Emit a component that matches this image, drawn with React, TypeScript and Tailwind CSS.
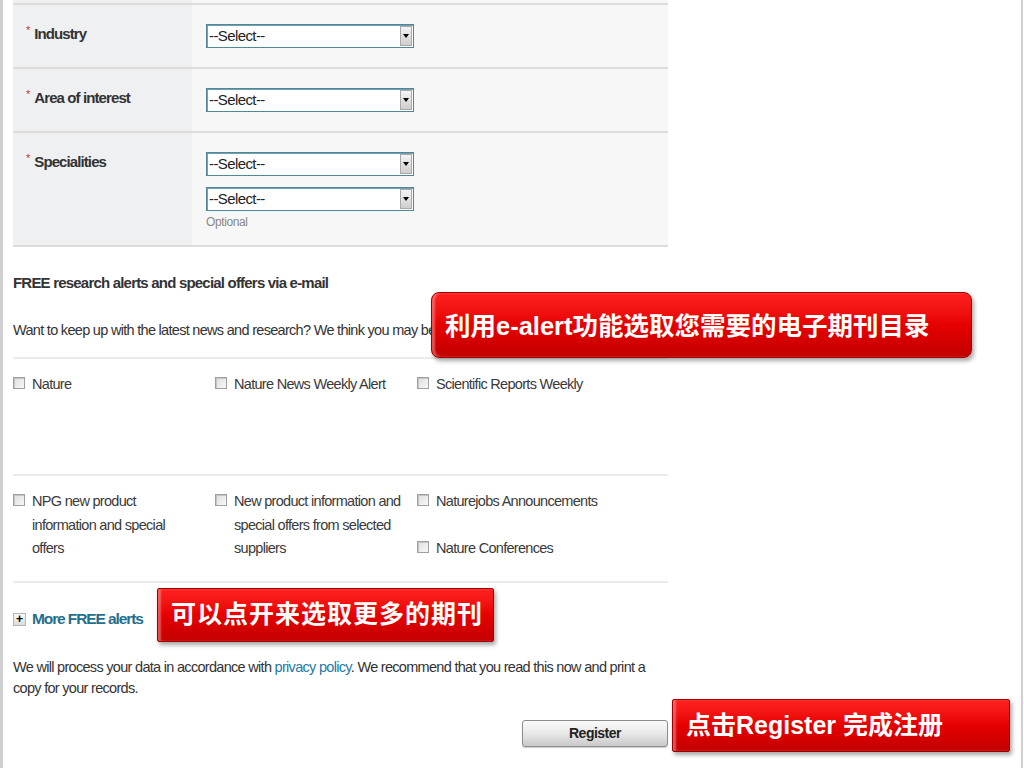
import React from "react";

const SANS = "font-['Liberation_Sans',Arial,sans-serif]";
const CJK = "font-['Liberation_Sans','Noto_Sans_CJK_SC',sans-serif]";
// the page is a squeezed screenshot: body copy runs tight
const BODY = "text-[14.5px] tracking-[-0.7px]";

function Select() {
  return (
    <div className="flex h-[24px] w-[208px] border border-[#4f8797] bg-white shadow-[inset_1px_1px_0_#6fa3b1]">
      <span className="flex-1 pl-[2px] text-[15px] leading-[22px] tracking-[-0.6px] text-[#222]">--Select--</span>
      <span className="m-[1px] flex w-[12px] items-center justify-center border border-[#a9a9a9] bg-gradient-to-b from-[#f4f4f4] to-[#cfcfcf]">
        <span className="h-0 w-0 border-x-[3px] border-t-[4px] border-x-transparent border-t-black" />
      </span>
    </div>
  );
}

function Row({ label, children, h }: { label: string; children: React.ReactNode; h: string }) {
  return (
    <div className={`flex border-t-2 border-[#dcdcdc] ${h}`}>
      <div className="w-[179px] bg-[#eff0f2] pl-[13px] pt-[17px]">
        <span className="align-top text-[11px] text-[#c0392b]">*</span>
        <span className="ml-[4px] text-[15px] font-bold leading-[18px] tracking-[-0.9px] text-[#333]">{label}</span>
      </div>
      <div className="flex-1 bg-[#f7f7f7] pl-[14px] pt-[19px]">{children}</div>
    </div>
  );
}

function Check({ children }: { children: React.ReactNode }) {
  return (
    <div className="flex gap-[7px]">
      <span className="mt-[4px] h-[12px] w-[12px] shrink-0 border border-[#a0a0a0] bg-gradient-to-br from-[#dedede] to-[#f8f8f8] shadow-[inset_1px_1px_0_#c4c4c4]" />
      <span className={`${BODY} leading-[23.5px] text-[#3a3a3a]`}>{children}</span>
    </div>
  );
}

function Callout({ pos, text, round }: { pos: string; text: string; round: string }) {
  return (
    <div
      className={`absolute ${pos} ${round} flex items-center border border-[#9c0000] bg-gradient-to-b from-[#ff2020] via-[#e60000] to-[#c20000] pl-[13px] font-bold text-white shadow-[2px_3px_4px_rgba(0,0,0,0.35),inset_3px_0_2px_rgba(255,160,160,0.5)] ${CJK}`}
    >
      {text}
    </div>
  );
}

export default function App() {
  return (
    <div className={`relative h-[768px] w-[1024px] overflow-hidden bg-white ${SANS}`}>
      <div className="flex h-full">
        <div className="w-[3px] bg-[#cfcfcf]" />
        <div className="ml-[10px] w-[655px]">
          <div className="flex h-[3px]">
            <div className="w-[179px] bg-[#eff0f2]" />
            <div className="flex-1 bg-[#f7f7f7]" />
          </div>
          <Row label="Industry" h="h-[64px]">
            <Select />
          </Row>
          <Row label="Area of interest" h="h-[64px]">
            <Select />
          </Row>
          <div className="border-b-2 border-[#dcdcdc]">
            <Row label="Specialities" h="h-[114px]">
              <div className="flex flex-col gap-[11px]">
                <Select />
                <div>
                  <Select />
                  <div className="mt-[2px] text-[12px] tracking-[-0.4px] text-[#888]">Optional</div>
                </div>
              </div>
            </Row>
          </div>

          <h3 className="mt-[27px] text-[15px] font-bold leading-[18px] tracking-[-0.8px] text-[#333]">
            FREE research alerts and special offers via e-mail
          </h3>
          <p className={`mt-[29px] whitespace-nowrap leading-[18px] text-[#333] ${BODY}`}>
            Want to keep up with the latest news and research? We think you may be
          </p>

          <div className="mt-[18px] grid h-[117px] grid-cols-[202px_202px_1fr] border-t-2 border-[#ebebeb] pt-[14px]">
            <Check>Nature</Check>
            <Check>Nature News Weekly Alert</Check>
            <Check>Scientific Reports Weekly</Check>
          </div>
          <div className="grid h-[107px] grid-cols-[202px_202px_1fr] border-t-2 border-[#ebebeb] pt-[14px]">
            <div className="pr-[30px]">
              <Check>NPG new product information and special offers</Check>
            </div>
            <div className="pr-[4px]">
              <Check>New product information and special offers from selected suppliers</Check>
            </div>
            <div className="flex flex-col gap-[23.5px]">
              <Check>Naturejobs Announcements</Check>
              <Check>Nature Conferences</Check>
            </div>
          </div>

          <div className="flex items-center gap-[6px] border-t-2 border-[#ebebeb] pt-[27px]">
            <span className="flex h-[13px] w-[13px] items-center justify-center border border-[#b5b5b5] bg-gradient-to-b from-[#fafafa] to-[#dcdcdc] text-[12px] font-bold leading-none text-black">
              +
            </span>
            <span className="text-[15.5px] font-bold leading-[18px] tracking-[-1.1px] text-[#1f6f8e]">More FREE alerts</span>
          </div>

          <p className={`mt-[29px] leading-[21px] text-[#333] ${BODY}`}>
            We will process your data in accordance with <span className="text-[#2678a6]">privacy policy</span>. We
            recommend that you read this now and print a copy for your records.
          </p>

          <div className="mt-[21px] flex justify-end">
            <button className="h-[27px] w-[146px] rounded-[3px] border border-[#8c8c8c] bg-gradient-to-b from-[#fbfbfb] via-[#e8e8e8] to-[#c9c9c9] text-[14px] font-bold tracking-[-0.5px] text-[#222] shadow-[0_1px_1px_rgba(0,0,0,0.2)]">
              Register
            </button>
          </div>
        </div>
        <div className="flex-1" />
        <div className="mr-[1px] w-[2px] bg-[#d0d0d0]" />
      </div>

      <Callout
        pos="left-[431px] top-[292px] h-[66px] w-[541px] pt-[3px] text-[25.5px]"
        round="rounded-[8px]"
        text="利用e-alert功能选取您需要的电子期刊目录"
      />
      <Callout
        pos="left-[157px] top-[588px] h-[54px] w-[337px] text-[25px] tracking-[1px]"
        round="rounded-[2px]"
        text="可以点开来选取更多的期刊"
      />
      <Callout
        pos="left-[672px] top-[699px] h-[53px] w-[338px] text-[25px]"
        round="rounded-[2px]"
        text="点击Register 完成注册"
      />
    </div>
  );
}
